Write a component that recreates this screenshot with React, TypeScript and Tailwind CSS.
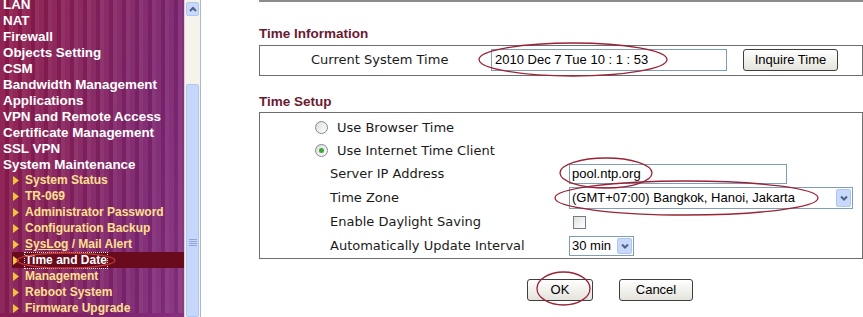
const topMenu = [
  "LAN",
  "NAT",
  "Firewall",
  "Objects Setting",
  "CSM",
  "Bandwidth Management",
  "Applications",
  "VPN and Remote Access",
  "Certificate Management",
  "SSL VPN",
  "System Maintenance",
];

const subMenu = [
  "System Status",
  "TR-069",
  "Administrator Password",
  "Configuration Backup",
  "SysLog / Mail Alert",
  "Time and Date",
  "Management",
  "Reboot System",
  "Firmware Upgrade",
];

const SELECTED = "Time and Date";

function Marker() {
  return (
    <svg width="6" height="9" viewBox="0 0 6 9" className="shrink-0">
      <path d="M0 0 L6 4.5 L0 9 Z" fill="#f2c33c" />
    </svg>
  );
}

function Chevron({ up = false }: { up?: boolean }) {
  return (
    <svg width="8" height="6" viewBox="0 0 8 6">
      <path
        d={up ? "M1 5 L4 2 L7 5" : "M1 1.5 L4 4.5 L7 1.5"}
        fill="none"
        stroke="#4d6185"
        strokeWidth="2"
      />
    </svg>
  );
}

function Sidebar() {
  return (
    <div className="h-full w-[184px] shrink-0 bg-[linear-gradient(100deg,#8d1746_0%,#85205c_40%,#7c2470_75%,#86317f_100%)]">
      <div className="h-full bg-[repeating-linear-gradient(90deg,rgba(255,255,255,0.05)_0px,rgba(255,255,255,0.05)_5px,rgba(0,0,0,0.05)_5px,rgba(0,0,0,0.05)_9px,rgba(255,255,255,0.09)_9px,rgba(255,255,255,0.09)_13px)]">
        <ul className="pt-[-3px] font-['Liberation_Sans',Arial,sans-serif] font-bold">
          {topMenu.map((item, i) => (
            <li
              key={item}
              className={
                i === 0
                  ? "mt-[-4px] h-[16px] pl-[3px] pt-px text-[13.4px] leading-[16px] text-white"
                  : "h-[16px] pl-[3px] pt-px text-[13.4px] leading-[16px] text-white"
              }
            >
              {item}
            </li>
          ))}
          {subMenu.map((item) => {
            const selected = item === SELECTED;
            return (
              <li
                key={item}
                className={
                  selected
                    ? "ml-[12px] flex h-[16px] items-center gap-[6px] bg-[#6a0a1d] pl-[1px] pt-px text-[12px] leading-[15px] text-white"
                    : "ml-[12px] flex h-[16px] items-center gap-[6px] pl-[1px] pt-px text-[12px] leading-[15px] text-[#ffe08e]"
                }
              >
                <Marker />
                {selected ? (
                  <span className="outline-1 outline-dotted outline-[#f4e6c0]">
                    {item}
                  </span>
                ) : item.startsWith("SysLog") ? (
                  <span>
                    <span className="underline">SysLog</span> / Mail Alert
                  </span>
                ) : (
                  <span>{item}</span>
                )}
              </li>
            );
          })}
        </ul>
      </div>
    </div>
  );
}

function Scrollbar() {
  return (
    <div className="flex h-full shrink-0">
      <div className="w-px bg-[#d9cfdc]" />
      <div className="flex w-[15px] flex-col bg-[#f5f3ea]">
        <div className="mx-px mt-[2px] flex h-[14px] items-center justify-center rounded-[2px] border border-[#b1c5f2] bg-[#c8d9fc]">
          <Chevron up />
        </div>
        <div className="h-[68px]" />
        <div className="mx-px flex flex-1 flex-col items-center rounded-[2px] border border-[#afc5f3] bg-[#c6d7fb] pt-[154px]">
          <div className="flex flex-col gap-[1px]">
            <div className="h-px w-[8px] bg-[#8fa6d6]" />
            <div className="h-px w-[8px] bg-[#8fa6d6]" />
            <div className="h-px w-[8px] bg-[#8fa6d6]" />
            <div className="h-px w-[8px] bg-[#8fa6d6]" />
          </div>
        </div>
      </div>
      <div className="w-px bg-[#a9b8cf]" />
    </div>
  );
}

function XpButton({ label, width }: { label: string; width: string }) {
  return (
    <div
      className={`${width} flex h-[22px] items-center justify-center rounded-[3px] border border-[#3f3f3f] bg-gradient-to-b from-white to-[#e4e3dc] font-['Liberation_Sans',Arial,sans-serif] text-[13px] text-black`}
    >
      {label}
    </div>
  );
}

function Radio({ checked }: { checked?: boolean }) {
  return (
    <div className="flex h-[13px] w-[13px] items-center justify-center rounded-full border border-[#7b8a98] bg-gradient-to-br from-[#dcdcd6] to-white">
      {checked ? <div className="h-[5px] w-[5px] rounded-full bg-[#3da53d]" /> : null}
    </div>
  );
}

function SelectBox({ value, width, height }: { value: string; width: string; height: string }) {
  return (
    <div
      className={`${width} ${height} flex items-center border border-[#7f9db9] bg-white pl-[2px] pr-px font-['Liberation_Sans',Arial,sans-serif] text-[13px] text-black`}
    >
      <span className="flex-1 whitespace-nowrap">{value}</span>
      <div className="flex h-[calc(100%-2px)] w-[15px] items-center justify-center rounded-[2px] border border-[#b1c5f2] bg-[#c8d9fc]">
        <Chevron />
      </div>
    </div>
  );
}

function Heading({ children }: { children: string }) {
  return (
    <h2 className="h-[16px] font-['Liberation_Sans',Arial,sans-serif] text-[13.5px] font-bold leading-[16px] text-[#6b1a30]">
      {children}
    </h2>
  );
}

function FormRow({ label, height, children }: { label: string; height: string; children: React.ReactNode }) {
  return (
    <div className={`flex ${height} items-center pl-[70px]`}>
      <span className="w-[239px] shrink-0">{label}</span>
      {children}
    </div>
  );
}

function Content() {
  return (
    <div className="flex-1 pl-[58px] font-['DejaVu_Sans',Verdana,sans-serif] text-[13px] text-[#1a1a1a]">
      <div className="h-[2px] bg-[#8c8c8c]" />

      <div className="mt-[24px] mb-[3px]">
        <Heading>Time Information</Heading>
      </div>
      <div className="flex items-center border border-[#6e6e6e] pt-[3px] pb-[4px] pl-[51px]">
        <span className="w-[180px] shrink-0">Current System Time</span>
        <div className="flex h-[22px] w-[236px] items-center border border-[#7f9db9] pl-[3px] font-['Liberation_Sans',Arial,sans-serif] text-[13px] text-black">
          2010 Dec 7 Tue 10 : 1 : 53
        </div>
        <div className="ml-[16px]">
          <XpButton label="Inquire Time" width="w-[95px]" />
        </div>
      </div>

      <div className="mt-[18px] mb-[2px]">
        <Heading>Time Setup</Heading>
      </div>
      <div className="border border-[#6e6e6e] pt-[3px] pb-px">
        <div className="flex h-[23px] items-center gap-[9px] pl-[55px]">
          <Radio />
          <span>Use Browser Time</span>
        </div>
        <div className="flex h-[23px] items-center gap-[9px] pl-[55px]">
          <Radio checked />
          <span>Use Internet Time Client</span>
        </div>
        <FormRow label="Server IP Address" height="h-[23px]">
          <div className="flex h-[20px] w-[218px] items-center border border-[#7f9db9] pl-[2px] font-['Liberation_Sans',Arial,sans-serif] text-[13px] text-black">
            pool.ntp.org
          </div>
        </FormRow>
        <FormRow label="Time Zone" height="h-[25px]">
          <SelectBox
            value="(GMT+07:00) Bangkok, Hanoi, Jakarta"
            width="w-[284px]"
            height="h-[22px]"
          />
        </FormRow>
        <FormRow label="Enable Daylight Saving" height="h-[24px]">
          <div className="ml-[4px] h-[13px] w-[13px] border border-[#6f7e8f] bg-gradient-to-br from-[#e2e2dc] to-white" />
        </FormRow>
        <FormRow label="Automatically Update Interval" height="h-[23px]">
          <SelectBox value="30 min" width="w-[65px]" height="h-[20px]" />
        </FormRow>
      </div>

      <div className="mt-[20px] flex gap-[26px] pl-[268px]">
        <XpButton label="OK" width="w-[66px]" />
        <XpButton label="Cancel" width="w-[74px]" />
      </div>
    </div>
  );
}

export default function App() {
  return (
    <div className="relative flex h-[317px] w-[863px] overflow-hidden bg-white">
      <Sidebar />
      <Scrollbar />
      <Content />
      <svg
        className="pointer-events-none absolute inset-0"
        width="863"
        height="317"
        viewBox="0 0 863 317"
      >
        <g fill="none" strokeWidth="1.3">
          <ellipse cx="573" cy="59.5" rx="94" ry="16.5" stroke="#9b2335" />
          <ellipse cx="606" cy="173" rx="46" ry="15" stroke="#9b2335" />
          <ellipse cx="686.5" cy="198" rx="131.5" ry="17" stroke="#9b2335" />
          <ellipse cx="563.5" cy="288.5" rx="26.5" ry="16.5" stroke="#9b2335" />
          <ellipse cx="66" cy="260.5" rx="49" ry="7.5" stroke="#c23a3a" />
        </g>
      </svg>
    </div>
  );
}
